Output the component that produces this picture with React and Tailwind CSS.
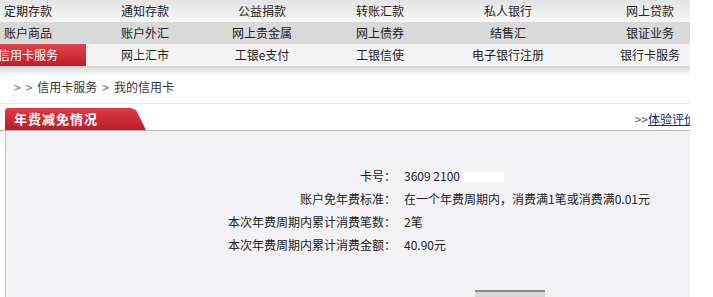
const navRows = [
  ["定期存款", "通知存款", "公益捐款", "转账汇款", "私人银行", "网上贷款"],
  ["账户商品", "账户外汇", "网上贵金属", "网上债券", "结售汇", "银证业务"],
  ["信用卡服务", "网上汇市", "工银e支付", "工银信使", "电子银行注册", "银行卡服务"],
];

const details = [
  { label: "卡号：", value: "3609 2100", masked: true },
  { label: "账户免年费标准：", value: "在一个年费周期内，消费满1笔或消费满0.01元" },
  { label: "本次年费周期内累计消费笔数：", value: "2笔" },
  { label: "本次年费周期内累计消费金额：", value: "40.90元" },
];

function NavRow({ items, index }) {
  const rowBg =
    index === 1
      ? "bg-[#d9d9d9]"
      : index === 0
      ? "bg-gradient-to-b from-[#e4e4e4] to-[#f7f7f7]"
      : "bg-[#f4f4f4]";

  return (
    <div
      className={`-ml-[30px] grid h-[22px] w-[754px] grid-cols-[116px_118px_116px_120px_136px_148px] ${rowBg}`}
    >
      {items.map((item, i) => {
        const active = index === 2 && i === 0;
        return (
          <div
            key={item}
            className={`flex items-center justify-center text-[12px] ${
              active
                ? "bg-gradient-to-b from-[#e2424f] to-[#bd1d2c] text-white"
                : "text-[#222]"
            }`}
          >
            {item}
          </div>
        );
      })}
    </div>
  );
}

export default function App() {
  return (
    <div className="h-[297px] w-[713px] overflow-hidden bg-white font-['Noto_Sans_CJK_SC',sans-serif]">
      <div className="w-[690px] overflow-hidden">
        {/* Nav */}
        <div>
          {navRows.map((row, i) => (
            <NavRow key={i} items={row} index={i} />
          ))}
        </div>
        <div className="h-[10px] bg-gradient-to-b from-[#d6d6d6] to-white" />

        {/* Breadcrumb */}
        <div className="flex h-[22px] items-center gap-[5px] pl-[14px] text-[12px] text-[#333]">
          <span className="text-[#666]">&gt;</span>
          <span className="text-[#666]">&gt;</span>
          <span>信用卡服务</span>
          <span className="text-[#666]">&gt;</span>
          <span>我的信用卡</span>
        </div>
        <div className="mt-[5px] h-px bg-[#e6e6e6]" />

        {/* Tab header */}
        <div className="mt-[4px] flex h-[23px] items-end border-b border-[#b4b4b4] pl-[5px]">
          <div className="flex h-[22px] w-[141px] items-center rounded-tl-[3px] bg-gradient-to-b from-[#de3a45] to-[#b91c2b] pl-[9px] text-[13px] font-bold tracking-[1px] text-white [clip-path:polygon(0_0,126px_0,131px_2px,141px_100%,0_100%)]">
            年费减免情况
          </div>
          <div className="ml-auto mr-[-6px] flex h-full items-center text-[12px] text-[#23236e]">
            <span className="text-[#555]">&gt;&gt;</span>
            <span className="underline">体验评价</span>
          </div>
        </div>

        {/* Panel */}
        <div className="ml-[5px] h-[170px] border-l border-[#c4c4c4] bg-[#f2f1f4] pt-[37px]">
          <div className="flex flex-col gap-[7px] text-[12px] leading-[16px] text-[#222]">
            {details.map((d) => (
              <div key={d.label} className="grid grid-cols-[390px_1fr] gap-[8px]">
                <div className="text-right">{d.label}</div>
                <div className="flex items-center">
                  <span>{d.value}</span>
                  {d.masked && (
                    <span className="ml-[3px] h-[11px] w-[41px] bg-white" />
                  )}
                </div>
              </div>
            ))}
          </div>
          <div className="mt-[37px] ml-[469px] h-[10px] w-[70px] border-t-2 border-[#8a8a8a] bg-[#d6d6d6]" />
        </div>
      </div>
    </div>
  );
}
